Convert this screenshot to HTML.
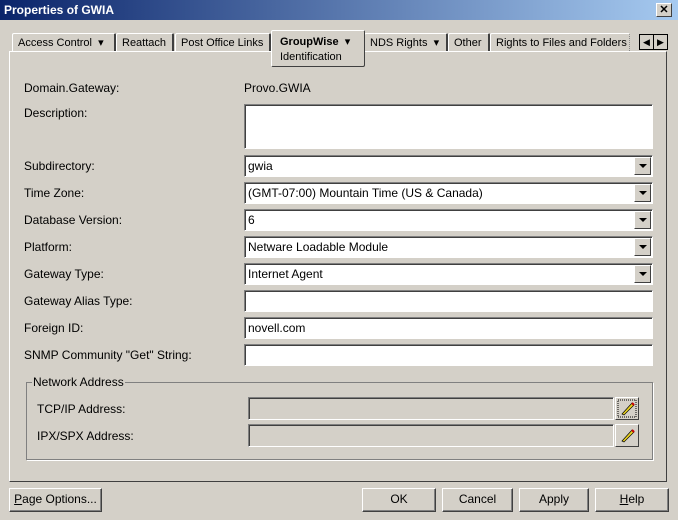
<!DOCTYPE html><html><head><style>
body{margin:0;width:678px;height:520px;overflow:hidden;background:#d4d0c8;font-family:"Liberation Sans",sans-serif;font-size:12px;color:#000;position:relative}
.a{position:absolute;white-space:nowrap}
.title{left:0;top:0;width:678px;height:20px;background:linear-gradient(90deg,#0a246a,#a6caf0);border-bottom:1px solid #d4d0c8}
.title span{position:absolute;left:4px;top:3px;color:#fff;font-weight:bold;font-size:12px}
.x{left:656px;top:3px;width:14px;height:12px;background:#d4d0c8;border:1px solid;border-color:#fff #404040 #404040 #fff;font-size:11px;line-height:12px;text-align:center;font-weight:bold}
.tab{top:33px;height:18px;border:1px solid #fff;border-bottom:none;border-right:2px solid #404040;border-radius:2px 2px 0 0;line-height:18px;padding-left:5px;box-sizing:border-box;font-size:11px;overflow:hidden}
.panel{left:9px;top:51px;width:658px;height:431px;border:1px solid;border-color:#fff #404040 #404040 #fff;box-sizing:border-box}
.lbl{left:24px}
.in{left:244px;width:409px;height:22px;background:#fff;border:1px solid;border-color:#808080 #fff #fff #808080;box-shadow:inset 1px 1px 0 #404040;box-sizing:border-box;padding:3px 0 0 3px}
.dd{position:absolute;right:1px;top:1px;width:17px;height:18px;background:#d4d0c8;border:1px solid;border-color:#fff #404040 #404040 #fff;box-sizing:border-box}
.dd:after{content:"";position:absolute;left:4px;top:6px;border:4px solid transparent;border-top:4px solid #000;border-bottom:none}
.btn{top:488px;height:24px;border:1px solid;border-color:#fff #404040 #404040 #fff;box-shadow:inset -1px -1px 0 #808080;box-sizing:border-box;text-align:center;line-height:21px}
.dis{left:248px;width:366px;height:23px;border:1px solid;border-color:#808080 #fff #fff #808080;box-shadow:inset 1px 1px 0 #404040;box-sizing:border-box}
.pb{left:615px;width:24px;height:23px;border:1px solid;border-color:#fff #404040 #404040 #fff;box-sizing:border-box}
</style></head><body>
<div class="a title"><span>Properties of GWIA</span></div>
<div class="a x">✕</div>
<div class="a panel"></div>
<div class="a tab" style="left:12px;width:104px">Access Control &nbsp;▾</div>
<div class="a tab" style="left:116px;width:58px">Reattach</div>
<div class="a tab" style="left:175px;width:96px">Post Office Links</div>
<div class="a tab" style="left:364px;width:84px">NDS Rights &nbsp;▾</div>
<div class="a tab" style="left:448px;width:42px">Other</div>
<div class="a tab" style="left:490px;width:140px;border-right:1px dotted #888">Rights to Files and Folders</div>
<div class="a" style="left:271px;top:30px;width:94px;height:37px;background:#d4d0c8;border:1px solid;border-color:#fff #404040 #404040 #fff;border-radius:2px;box-sizing:border-box;padding:4px 0 0 8px;line-height:15px;font-size:11px"><b>GroupWise</b> &nbsp;▾<br>Identification</div>
<div class="a" style="left:639px;top:34px;width:15px;height:16px;border:1px solid #000;box-sizing:border-box;font-size:9px;text-align:center;line-height:14px">◀</div>
<div class="a" style="left:653px;top:34px;width:15px;height:16px;border:1px solid #000;box-sizing:border-box;font-size:9px;text-align:center;line-height:14px">▶</div>
<div class="a lbl" style="top:81px">Domain.Gateway:</div><div class="a" style="left:244px;top:81px">Provo.GWIA</div>
<div class="a lbl" style="top:106px">Description:</div><div class="a in" style="top:104px;height:45px"></div>
<div class="a lbl" style="top:159px">Subdirectory:</div><div class="a in" style="top:155px">gwia<div class="dd"></div></div>
<div class="a lbl" style="top:186px">Time Zone:</div><div class="a in" style="top:182px">(GMT-07:00) Mountain Time (US &amp; Canada)<div class="dd"></div></div>
<div class="a lbl" style="top:213px">Database Version:</div><div class="a in" style="top:209px">6<div class="dd"></div></div>
<div class="a lbl" style="top:240px">Platform:</div><div class="a in" style="top:236px">Netware Loadable Module<div class="dd"></div></div>
<div class="a lbl" style="top:267px">Gateway Type:</div><div class="a in" style="top:263px">Internet Agent<div class="dd"></div></div>
<div class="a lbl" style="top:294px">Gateway Alias Type:</div><div class="a in" style="top:290px"></div>
<div class="a lbl" style="top:321px">Foreign ID:</div><div class="a in" style="top:317px">novell.com</div>
<div class="a lbl" style="top:348px">SNMP Community "Get" String:</div><div class="a in" style="top:344px"></div>
<div class="a" style="left:26px;top:382px;width:627px;height:78px;border:1px solid #808080;box-shadow:1px 1px 0 #fff;box-sizing:border-box"></div>
<div class="a" style="left:32px;top:375px;background:#d4d0c8;padding:0 1px">Network Address</div>
<div class="a" style="left:37px;top:402px">TCP/IP Address:</div><div class="a dis" style="top:397px"></div>
<div class="a pb" style="top:397px"><svg width="22" height="21"><rect x="2" y="2" width="18" height="17" fill="none" stroke="#000" stroke-dasharray="1 1"/><path d="M6 16 L16 5 L18 7 L8 17 Z" fill="#e8d020" stroke="#000" stroke-width=".7"/><path d="M16 5l2 2" stroke="#c00" stroke-width="2"/></svg></div>
<div class="a" style="left:37px;top:429px">IPX/SPX Address:</div><div class="a dis" style="top:424px"></div>
<div class="a pb" style="top:424px"><svg width="22" height="21"><path d="M6 16 L16 5 L18 7 L8 17 Z" fill="#e8d020" stroke="#000" stroke-width=".7"/><path d="M16 5l2 2" stroke="#c00" stroke-width="2"/></svg></div>
<div class="a btn" style="left:9px;width:93px"><u>P</u>age Options...</div>
<div class="a btn" style="left:362px;width:74px">OK</div>
<div class="a btn" style="left:442px;width:71px">Cancel</div>
<div class="a btn" style="left:519px;width:70px">Apply</div>
<div class="a btn" style="left:595px;width:74px"><u>H</u>elp</div>
</body></html>
